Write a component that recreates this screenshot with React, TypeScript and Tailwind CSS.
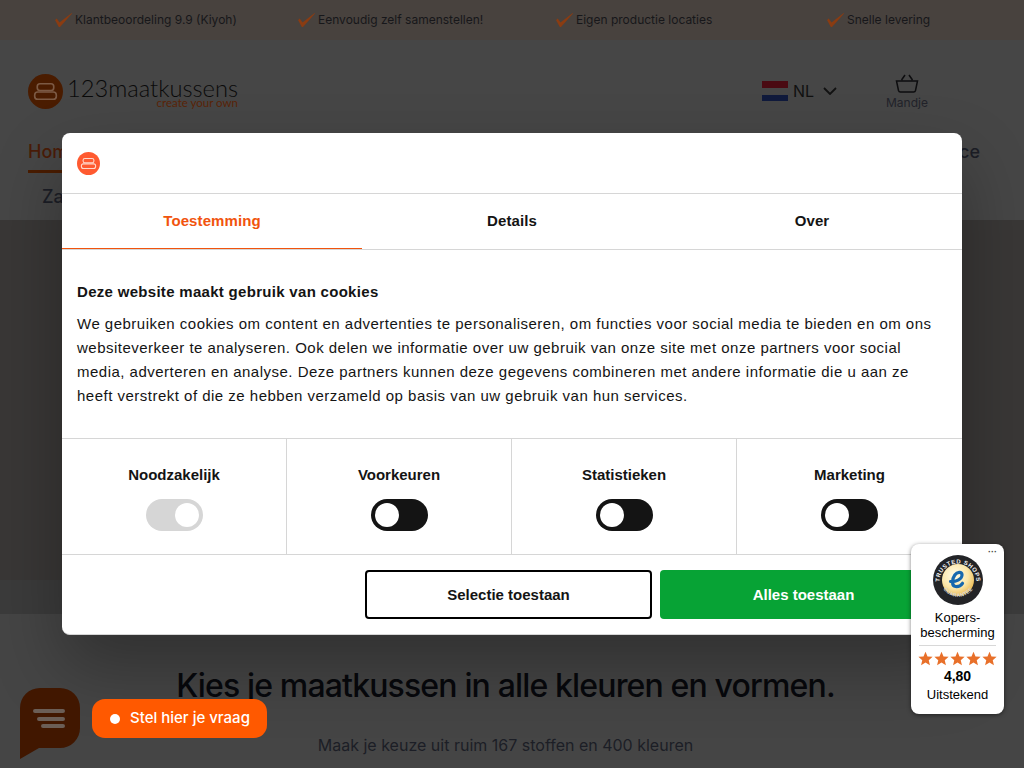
const usps = [
  { label: "Klantbeoordeling 9.9 (Kiyoh)", width: "w-[243px]" },
  { label: "Eenvoudig zelf samenstellen!", width: "w-[258px]" },
  { label: "Eigen productie locaties", width: "w-[271px]" },
  { label: "Snelle levering", width: "flex-1" },
];

const consent = ["Noodzakelijk", "Voorkeuren", "Statistieken", "Marketing"];

const LogoMark = ({ className, stroke }: { className: string; stroke: string }) => (
  <svg viewBox="0 0 34 34" className={className}>
    <circle cx="17" cy="17" r="17" fill="currentColor" />
    <rect x="9" y="9.500" width="16" height="6.500" rx="2.600" fill="none" stroke={stroke} strokeWidth="1.600" />
    <rect x="6.500" y="17.500" width="21" height="7" rx="3" fill="none" stroke={stroke} strokeWidth="1.600" />
  </svg>
);

const Toggle = ({ locked }: { locked?: boolean }) =>
  locked ? (
    <div className="w-[57px] h-[32px] rounded-full bg-[#d6d6d6] flex items-center justify-end pr-[4px]">
      <div className="w-[24px] h-[24px] rounded-full bg-white" />
    </div>
  ) : (
    <div className="w-[57px] h-[32px] rounded-full bg-[#141414] flex items-center pl-[4px]">
      <div className="w-[24px] h-[24px] rounded-full bg-white" />
    </div>
  );

const Star = () => (
  <svg viewBox="0 0 24 24" className="w-[15px] h-[15px] text-[#e8702a]">
    <path fill="currentColor" d="M12 1l3.200 7.600 8.200.7-6.200 5.400 1.900 8L12 18.400l-7.100 4.300 1.900-8L.6 9.300l8.200-.7z" />
  </svg>
);

const UspCheck = () => (
  <svg viewBox="0 0 18 14" className="w-[18px] h-[14px] shrink-0 text-[#8a3c12]">
    <path fill="currentColor" d="M0 7l1.800-1.500 2.700 4L16.700 0l.3.500L5 14H3.800z" />
  </svg>
);

const Seal = () => (
  <svg viewBox="0 0 50 50" className="w-[50px] h-[50px] mt-[11px]">
    <defs>
      <radialGradient id="gold" cx="40%" cy="35%" r="70%">
        <stop offset="0%" stopColor="#fffbe8" />
        <stop offset="60%" stopColor="#fbe6a8" />
        <stop offset="100%" stopColor="#e9b64c" />
      </radialGradient>
      <path id="sealTop" d="M6.500 27a18.500 18.500 0 0 1 37 0" />
      <path id="sealBottom" d="M9.500 33a18 18 0 0 0 31 0" />
    </defs>
    <circle cx="25" cy="25" r="25" fill="#232427" />
    <circle cx="25" cy="25" r="16" fill="url(#gold)" />
    <text fontSize="6" fontWeight="700" fill="#f2f2f2" fontFamily="Liberation Sans, sans-serif" letterSpacing="0.500">
      <textPath href="#sealTop" startOffset="50%" textAnchor="middle">TRUSTED SHOPS</textPath>
    </text>
    <text fontSize="5" fontWeight="700" fill="#d8d8d8" fontFamily="Liberation Sans, sans-serif" letterSpacing="0.300">
      <textPath href="#sealBottom" startOffset="50%" textAnchor="middle">GUARANTEE</textPath>
    </text>
    <path d="M17.500 26.500c4.500.5 12-2 11.500-7-.4-3.200-4.800-2.800-7.200.5-3 4.200-3.300 11 .7 11.500 2.800.3 5.500-1 7-3.200" fill="none" stroke="#1768ae" strokeWidth="3.200" strokeLinecap="round" />
  </svg>
);

export default function App() {
  return (
    <div className="relative w-[1024px] h-[768px] overflow-hidden bg-[#454545] font-['Inter',sans-serif] text-[#0d0d0f]">
      {/* page behind the dialog */}
      <div className="h-[40px] bg-[#48423e] flex items-center pl-[55px] text-[12px] text-[#17171a]">
        {usps.map((u) => (
          <div key={u.label} className={`flex items-center gap-[2px] ${u.width}`}>
            <UspCheck />
            <span>{u.label}</span>
          </div>
        ))}
      </div>

      <div className="h-[180px] bg-[#464646]">
        <div className="flex items-start h-[100px] pt-[34px] pl-[28px]">
          <LogoMark className="w-[35px] h-[35px] text-[#4a1c00]" stroke="#7c5a44" />
          <div className="ml-[4px] w-[172px] pt-[4px]">
            <div className="font-['Lato',sans-serif] font-light text-[23.700px] leading-[20px] text-[#0a0a0a]">123maatkussens</div>
            <div className="pr-[1px] text-right font-['Lato',sans-serif] text-[11.500px] leading-[10px] text-[#5a2408]">create your own</div>
          </div>
          <div className="ml-[523px] flex items-center mt-[7px]">
            <div className="w-[26px] h-[20px] flex flex-col">
              <div className="h-[6.500px] bg-[#4a0a12]" />
              <div className="h-[7px]" />
              <div className="h-[6.500px] bg-[#101a3c]" />
            </div>
            <span className="ml-[5px] -mt-[1px] w-[30px] text-[16px] leading-[20px] text-[#111]">NL</span>
            <svg viewBox="0 0 14 8" className="w-[14px] h-[8px] text-[#111]">
              <path d="M1 1l6 6 6-6" fill="none" stroke="currentColor" strokeWidth="1.800" />
            </svg>
          </div>
          <div className="ml-[48px] -mt-[1px] w-[44px] flex flex-col items-center">
            <svg viewBox="0 0 26 22" className="w-[26px] h-[22px] text-[#0d0d0f]">
              <path d="M2.500 8h21l-2 9.500a2 2 0 0 1-2 1.500H6.500a2 2 0 0 1-2-1.500zM7.500 7l3.500-5M18.500 7l-3.500-5" fill="none" stroke="currentColor" strokeWidth="1.500" />
            </svg>
            <span className="mt-[2px] text-[12px] leading-[12px] text-[#22232a]">Mandje</span>
          </div>
        </div>
        <div className="flex justify-between pl-[28px] pr-[44px] text-[18px] font-medium leading-[24px]">
          <span className="text-[#4a1c08] border-b-[3px] border-[#4a1c00] h-[33px]">Home</span>
          <span className="text-[#1c1e26]">Service</span>
        </div>
        <div className="pl-[42px] mt-[12px] text-[18px] font-medium leading-[24px] text-[#1c1e26]">Zakelijk</div>
      </div>

      <div className="h-[360px] bg-[#393736]" />
      <div className="h-[34px] bg-[#3b3b3b]" />
      <div className="pt-[52px] pr-[13px] flex flex-col items-center">
        <h1 className="text-[32px] leading-[40px] font-medium tracking-[-0.85px] text-[#07080c]">Kies je maatkussen in alle kleuren en vormen.</h1>
        <p className="mt-[29px] text-[16px] leading-[20px] text-[#1c1e26]">Maak je keuze uit ruim 167 stoffen en 400 kleuren</p>
      </div>

      {/* cookie dialog */}
      <div className="absolute left-[62px] top-[133px] w-[900px] h-[502px] bg-white rounded-[8px] overflow-hidden border-b border-[#d6d6d6] shadow-[0_32px_68px_rgba(0,0,0,0.3)] font-['Liberation_Sans',sans-serif] text-[#141414] flex flex-col">
        <div className="h-[61px] shrink-0 border-b border-[#d6d6d6] flex items-center pl-[15px]">
          <LogoMark className="w-[23px] h-[23px] text-[#ff5a30]" stroke="#ffd9cc" />
        </div>
        <div className="h-[56px] shrink-0 border-b border-[#d6d6d6] flex text-[15px] font-bold tracking-[0.1px]">
          <div className="w-[300px] h-[55px] border-b border-[#f1540e] text-[#f1540e] flex items-center justify-center">Toestemming</div>
          <div className="w-[300px] flex items-center justify-center">Details</div>
          <div className="w-[300px] flex items-center justify-center">Over</div>
        </div>
        <div className="h-[189px] shrink-0 border-b border-[#d6d6d6] px-[15px] pt-[30px]">
          <h2 className="text-[15px] leading-[24px] font-bold tracking-[0.3px]">Deze website maakt gebruik van cookies</h2>
          <p className="mt-[8px] text-[15px] leading-[24px] tracking-[0.49px]">
            We gebruiken cookies om content en advertenties te personaliseren, om functies voor social media te bieden en om ons websiteverkeer te analyseren. Ook delen we informatie over uw gebruik van onze site met onze partners voor social media, adverteren en analyse. Deze partners kunnen deze gegevens combineren met andere informatie die u aan ze heeft verstrekt of die ze hebben verzameld op basis van uw gebruik van hun services.
          </p>
        </div>
        <div className="h-[116px] shrink-0 border-b border-[#d6d6d6] grid grid-cols-4">
          {consent.map((c, i) => (
            <div key={c} className={`flex flex-col items-center pt-[24px] ${i < 3 ? "border-r border-[#d6d6d6]" : ""}`}>
              <span className="text-[15px] leading-[24px] font-bold">{c}</span>
              <div className="mt-[12px]"><Toggle locked={i === 0} /></div>
            </div>
          ))}
        </div>
        <div className="flex justify-end gap-[8px] pt-[15px] pr-[15px] text-[15px] font-bold">
          <button className="w-[287px] h-[49px] pt-[1px] rounded-[4px] border-2 border-black">Selectie toestaan</button>
          <button className="w-[287px] h-[49px] pt-[1px] rounded-[4px] bg-[#07a335] text-white">Alles toestaan</button>
        </div>
      </div>

      {/* trusted shops badge */}
      <div className="absolute left-[911px] top-[544px] w-[93px] h-[170px] bg-white rounded-[8px] shadow-[0_1px_4px_rgba(0,0,0,0.5)] flex flex-col items-center font-['Liberation_Sans',sans-serif] text-black">
        <div className="absolute right-[7px] top-[4px] text-[9px] leading-[8px] font-bold text-[#444]">···</div>
        <Seal />
        <div className="mt-[5px] text-[13px] leading-[15px] text-center">Kopers-<br />bescherming</div>
        <div className="mt-[5px] w-[77px] border-t border-[#d8d8d8]" />
        <div className="mt-[5px] flex gap-[1px]"><Star /><Star /><Star /><Star /><Star /></div>
        <div className="mt-[2px] text-[14px] leading-[17px] font-bold">4,80</div>
        <div className="mt-[2px] text-[13px] leading-[15px]">Uitstekend</div>
      </div>

      {/* chat widget */}
      <svg viewBox="0 0 60 72" className="absolute left-[20px] top-[688px] w-[60px] h-[72px]">
        <path d="M20 0h20a20 20 0 0 1 20 20v20a20 20 0 0 1-20 20H19L0 71V20A20 20 0 0 1 20 0z" fill="#411700" />
        <path d="M15 23h28M19 31h24M23 38h20" stroke="#6b5e56" strokeWidth="4" strokeLinecap="round" fill="none" />
      </svg>
      <div className="absolute left-[92px] top-[699px] w-[175px] h-[39px] rounded-[13px] bg-[#ff5900] text-white flex items-center pl-[18px] gap-[10px] text-[15px] font-medium">
        <span className="w-[10px] h-[10px] rounded-full bg-white" />
        Stel hier je vraag
      </div>
    </div>
  );
}
